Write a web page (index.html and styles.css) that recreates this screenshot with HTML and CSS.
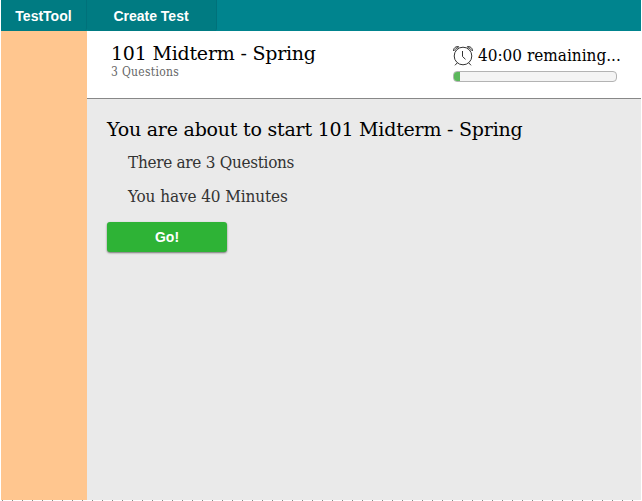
FILE: index.html
```html
<!DOCTYPE html>
<html lang="en">
<head>
<meta charset="utf-8">
<title>TestTool</title>
<link rel="stylesheet" href="styles.css">
</head>
<body>
<div class="app">
  <nav class="topbar">
    <a class="tab brand">TestTool</a>
    <a class="tab create">Create Test</a>
  </nav>
  <div class="body">
    <aside class="sidebar"></aside>
    <main class="main">
      <header class="test-header">
        <div>
          <h1 class="test-title"><span>101 Midterm - Spring</span></h1>
          <p class="test-count"><span>3 Questions</span></p>
        </div>
        <div class="timer">
          <div class="timer-row">
            <svg class="clock" viewBox="0 0 20 20" fill="none" stroke="#333" stroke-width="1">
              <circle cx="10" cy="10.5" r="8.8"/>
              <path d="M9.5 5.5V11l3 2.8M.6 5.5C.3 2.5 3 .3 6.1 1.4M1.8 5.2C2 3.5 3.5 2.2 5.3 2.1M19.4 5.5C19.7 2.5 17 .3 13.9 1.4M18.2 5.2C18 3.5 16.5 2.2 14.7 2.1M4.2 17.4l-2.2 2.4M15.8 17.4l2.2 2.4"/>
            </svg>
            <span class="remaining">40:00 remaining...</span>
          </div>
          <div class="progress"><div class="progress-fill"></div></div>
        </div>
      </header>
      <section class="intro">
        <h2 class="intro-title"><span>You are about to start 101 Midterm - Spring</span></h2>
        <p class="detail questions"><span>There are 3 Questions</span></p>
        <p class="detail minutes"><span>You have 40 Minutes</span></p>
        <button class="go">Go!</button>
      </section>
    </main>
  </div>
  <div class="dots"></div>
</div>
</body>
</html>
```
FILE: styles.css
```css
* { box-sizing: border-box; }
body { margin: 0; background: #fff; overflow: hidden; }
h1, h2, p { margin: 0; font-weight: 400; white-space: nowrap; }
.app {
  width: 640px;
  height: 501px;
  margin-left: 1px;
  display: flex;
  flex-direction: column;
  font-family: "DejaVu Serif Condensed", "DejaVu Serif", serif;
  font-stretch: condensed;
  color: #000;
}
.topbar { height: 31px; display: flex; background: #00848e; }
.tab {
  height: 31px;
  text-align: center;
  font: bold 14px/32px "Liberation Sans", sans-serif;
  color: #fff;
  background: #007b82;
  border-right: 1px solid #00717a;
  border-radius: 0 0 3px 3px;
}
.brand { width: 86px; }
.create { width: 130px; padding-right: 1px; }
.body { flex: 1; display: flex; }
.sidebar { width: 86px; background: #ffc68f; }
.main { flex: 1; display: flex; flex-direction: column; background: #eaeaea; }
.test-header {
  height: 68px;
  padding: 9px 20px 0 24px;
  display: flex;
  justify-content: space-between;
  background: #fff;
  border-bottom: 1px solid #888;
}
.test-title, .intro-title {
  font-family: "DejaVu Serif", serif;
  font-stretch: normal;
  font-size: 19px;
  line-height: 26px;
  letter-spacing: -0.22px;
}
.test-count { font-size: 12px; line-height: 13px; color: #666; letter-spacing: 0.3px; }
.timer { width: 168px; padding-top: 5px; }
.timer-row { display: flex; height: 21px; gap: 5px; }
.clock { width: 20px; height: 21px; flex: none; }
.remaining { font-size: 17px; line-height: 21px; white-space: nowrap; }
.progress {
  width: 164px;
  height: 11px;
  margin-top: 5px;
  border: 1px solid #b3b3b3;
  border-radius: 4px;
  background: #f4f4f4;
  overflow: hidden;
}
.progress-fill { width: 6px; height: 100%; background: #5cb85c; }
.intro { padding: 17px 20px 0; }
.detail { margin-left: 21px; font-size: 17px; line-height: 24px; color: #333; letter-spacing: -0.3px; }
.questions { margin-top: 8px; }
.minutes { margin-top: 10px; letter-spacing: -0.1px; }
.go {
  display: block;
  width: 120px;
  height: 30px;
  margin-top: 14px;
  padding: 0;
  border: 0;
  border-radius: 3px;
  background: #2eb336;
  box-shadow: 0 1px 2px rgba(0, 0, 0, 0.5);
  color: #fff;
  font: bold 14px/30px "Liberation Sans", sans-serif;
}
.dots {
  height: 1px;
  background: repeating-linear-gradient(90deg, #fff 0 1px, #888 1px 2px, #fff 2px 10px);
}
```
